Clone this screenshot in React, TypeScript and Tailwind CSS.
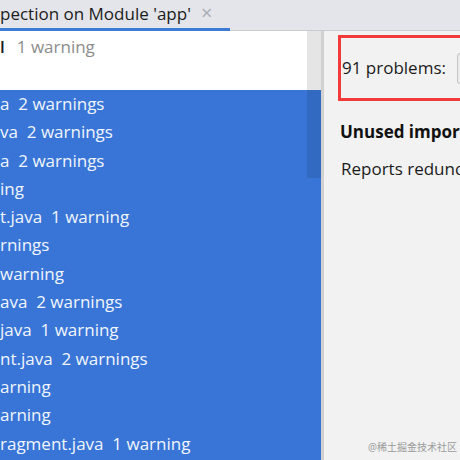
import React from 'react';

const font = { fontFamily: '"Open Sans", "Noto Sans", "Noto Sans CJK SC", sans-serif' };

type Row = { name: string; count: string; selected: boolean };

const rows: Row[] = [
  { name: 'l', count: '1 warning', selected: false },
  { name: '', count: '', selected: false },
  { name: 'a', count: '2 warnings', selected: true },
  { name: 'va', count: '2 warnings', selected: true },
  { name: 'a', count: '2 warnings', selected: true },
  { name: '', count: 'ing', selected: true },
  { name: 't.java', count: '1 warning', selected: true },
  { name: '', count: 'rnings', selected: true },
  { name: '', count: 'warning', selected: true },
  { name: 'ava', count: '2 warnings', selected: true },
  { name: 'java', count: '1 warning', selected: true },
  { name: 'nt.java', count: '2 warnings', selected: true },
  { name: '', count: 'arning', selected: true },
  { name: '', count: 'arning', selected: true },
  { name: 'ragment.java', count: '1 warning', selected: true },
];

export default function App() {
  return (
    <div className="w-[460px] h-[460px] overflow-hidden flex flex-col bg-[#f2f2f2] text-[17px]" style={font}>
      {/* tab bar */}
      <div className="h-[31px] shrink-0 bg-[#e3e5ea] border-b border-[#c9ccd2] flex">
        <div className="w-[230px] h-full relative flex items-center">
          <span className="whitespace-pre text-[#1b1b1b] -mt-[3px]">pection on Module 'app'</span>
          <span className="ml-[10px] -mt-[4px] text-[#a9acb2] text-[20px] leading-none">×</span>
          <div className="absolute left-0 right-0 bottom-[-1px] h-[3px] bg-[#3d7ad6]" />
        </div>
      </div>

      <div className="flex flex-1 min-h-0">
        {/* tree */}
        <div className="w-[321px] shrink-0 relative bg-white pt-[2px] overflow-hidden">
          {rows.map((r, i) =>
            r.selected ? (
              <div key={i} className="h-[28.3px] flex items-center whitespace-pre bg-[#3875d7] text-[#f2f5fb]">
                {r.name ? `${r.name}  ${r.count}` : r.count}
              </div>
            ) : (
              <div key={i} className="h-[28.3px] flex items-center whitespace-pre">
                {r.name && <span className="text-[#1b1b1b] font-semibold">{r.name}</span>}
                {r.count && <span className="ml-[12px] text-[#8c8c8c]">{r.count}</span>}
              </div>
            )
          )}
          {/* scrollbar thumb */}
          <div className="absolute left-[307px] top-0 w-[14px] h-[147px] bg-black/10" />
          {/* lower blue fill */}
          <div className="absolute left-0 right-0 top-[426px] bottom-0 bg-[#3875d7]" />
        </div>
        <div className="w-[3px] shrink-0 bg-[#d0d0d0]" />

        {/* details */}
        <div className="flex-1 min-w-0 overflow-hidden relative pl-[14px] pt-[4px]">
          <div className="h-[66px] border-[3px] border-r-0 border-[#f23a3a] flex items-center pl-[1px] gap-[11px]">
            <span className="text-[#1b1b1b] whitespace-pre">91 problems:</span>
            <div className="shrink-0 w-[20px] h-[31px] rounded-[3px] border border-[#c4c4c4] bg-[#ebebeb]" />
          </div>
          <div className="mt-[18px] pl-[2px] font-bold text-[#111] whitespace-pre">Unused import</div>
          <div className="mt-[11px] pl-[3px] text-[#1b1b1b] whitespace-pre">Reports redundant</div>
          <div className="absolute right-[3px] bottom-[5px] text-[10px] text-[#9a9a9a] whitespace-pre">@稀土掘金技术社区</div>
        </div>
      </div>
    </div>
  );
}
